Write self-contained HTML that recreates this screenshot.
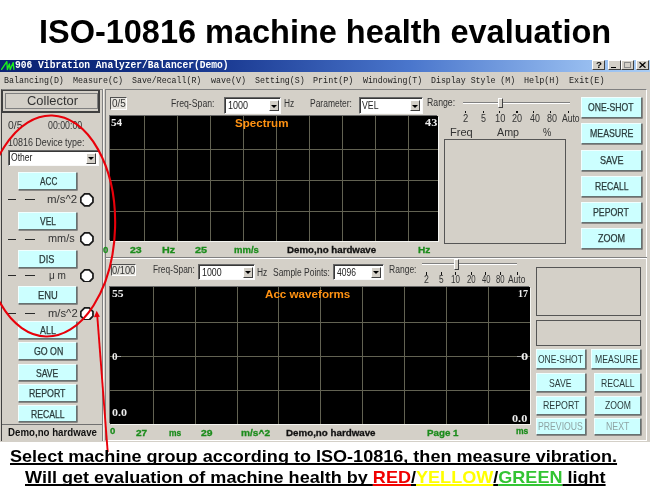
<!DOCTYPE html>
<html><head><meta charset="utf-8">
<style>
html,body{margin:0;padding:0;}
body{width:650px;height:488px;position:relative;overflow:hidden;background:#fff;font-family:"Liberation Sans",sans-serif;}
.a{position:absolute;white-space:nowrap;}
#tbar{left:0;top:59.6px;width:650px;height:12px;background:linear-gradient(90deg,#0c2274 0%,#0e2a7c 15%,#1c3c94 35%,#4a76cc 63%,#98bef0 91%,#a8ccf4 100%);}
#menu{left:0;top:71.6px;width:650px;height:18px;background:#d4d0c8;}
#win{left:0;top:89px;width:650px;height:352.5px;background:#d4d0c8;}
.btn{position:absolute;background:#ccffff;border:1px solid;border-color:#f0ffff #667272 #667272 #f0ffff;box-shadow:0.6px 0.6px 0 #585858;box-sizing:border-box;}
.chart{position:absolute;background:#000;overflow:hidden;box-shadow:1px 1px 0 #f4f4f0,-1px -1px 0 #6a6a6a;}
.chart b{position:absolute;background:#626252;display:block;}
.sel{position:absolute;background:#fff;border:1px solid;border-color:#686868 #f8f8f8 #f8f8f8 #686868;box-shadow:inset 1px 1px 0 #383838;box-sizing:border-box;}
.sel i{position:absolute;right:1.2px;top:1.8px;bottom:1.2px;width:10px;background:#d4d0c8;border:1px solid;border-color:#fff #404040 #404040 #fff;box-sizing:border-box;}
.sel i:after{content:"";position:absolute;left:0.9px;top:3.8px;border:3.1px solid transparent;border-top:3.4px solid #000;border-bottom:0;}
.sunk{position:absolute;border:1px solid;border-color:#808080 #fff #fff #808080;box-sizing:border-box;}
.box{position:absolute;border:1px solid #555;box-sizing:border-box;}
.wb{position:absolute;top:0.5px;height:10px;width:12.5px;background:#d4d0c8;border:1px solid;border-color:#fff #404040 #404040 #fff;box-sizing:border-box;}
.d{position:absolute;height:1.3px;background:#2a2a2a;}
</style></head><body><div id="root" style="position:absolute;left:0;top:0;width:650px;height:488px;will-change:transform;">
<div class="a" style="left:38.88px;top:11.50px;font-family:'Liberation Sans',sans-serif;font-weight:bold;font-size:33.5px;line-height:40px;color:#000;transform:scaleX(0.9693);transform-origin:0 0;">ISO-10816 machine health evaluation</div>
<div id="tbar" class="a"></div>
<svg class="a" style="left:1px;top:60.3px" width="14" height="11" viewBox="0 0 14 11"><path d="M0.6 9.4 L5.8 1.6 L6.4 9.6 L8.4 4 L9.2 9.6 L12.2 2.6 L12.9 9.2" fill="none" stroke="#1cf01c" stroke-width="1.35" stroke-linejoin="round" stroke-linecap="round"/></svg>
<div class="a" style="left:15.48px;top:58.70px;font-family:'Liberation Mono',monospace;font-weight:bold;font-size:10.5px;line-height:13px;color:#fff;transform:scaleX(0.9163);transform-origin:0 0;">906 Vibration Analyzer/Balancer(Demo)</div>
<div class="wb" style="left:592px;top:60.1px"></div>
<div class="wb" style="left:608px;top:60.1px"></div>
<div class="wb" style="left:621px;top:60.1px"></div>
<div class="wb" style="left:636px;top:60.1px"></div>
<div class="a" style="left:595.59px;top:60.00px;font-family:'Liberation Sans',sans-serif;font-weight:bold;font-size:9px;line-height:11px;color:#000;transform:scaleX(1.0811);transform-origin:0 0;">?</div>
<div class="a" style="left:611px;top:66.5px;width:5px;height:1.6px;background:#000"></div>
<div class="a" style="left:624px;top:62px;width:7px;height:6px;border:1px solid #8a8a8a;border-top-width:1.6px;box-sizing:border-box"></div>
<svg class="a" style="left:639px;top:62px" width="7" height="6" viewBox="0 0 7 6"><path d="M0.5 0.3 L6.5 5.7 M6.5 0.3 L0.5 5.7" stroke="#000" stroke-width="1.3"/></svg>
<div id="menu" class="a"></div>
<div class="a" style="left:4.07px;top:75.70px;font-family:'Liberation Mono',monospace;font-weight:normal;font-size:9px;line-height:11px;color:#222;transform:scaleX(0.9236);transform-origin:0 0;">Balancing(D)</div>
<div class="a" style="left:72.88px;top:75.70px;font-family:'Liberation Mono',monospace;font-weight:normal;font-size:9px;line-height:11px;color:#222;transform:scaleX(0.9260);transform-origin:0 0;">Measure(C)</div>
<div class="a" style="left:131.71px;top:75.70px;font-family:'Liberation Mono',monospace;font-weight:normal;font-size:9px;line-height:11px;color:#222;transform:scaleX(0.9165);transform-origin:0 0;">Save/Recall(R)</div>
<div class="a" style="left:211.44px;top:75.70px;font-family:'Liberation Mono',monospace;font-weight:normal;font-size:9px;line-height:11px;color:#222;transform:scaleX(0.9232);transform-origin:0 0;">wave(V)</div>
<div class="a" style="left:254.71px;top:75.70px;font-family:'Liberation Mono',monospace;font-weight:normal;font-size:9px;line-height:11px;color:#222;transform:scaleX(0.9215);transform-origin:0 0;">Setting(S)</div>
<div class="a" style="left:313.36px;top:75.70px;font-family:'Liberation Mono',monospace;font-weight:normal;font-size:9px;line-height:11px;color:#222;transform:scaleX(0.9352);transform-origin:0 0;">Print(P)</div>
<div class="a" style="left:363.10px;top:75.70px;font-family:'Liberation Mono',monospace;font-weight:normal;font-size:9px;line-height:11px;color:#222;transform:scaleX(0.9136);transform-origin:0 0;">Windowing(T)</div>
<div class="a" style="left:431.37px;top:75.70px;font-family:'Liberation Mono',monospace;font-weight:normal;font-size:9px;line-height:11px;color:#222;transform:scaleX(0.9174);transform-origin:0 0;">Display Style (M)</div>
<div class="a" style="left:524.35px;top:75.70px;font-family:'Liberation Mono',monospace;font-weight:normal;font-size:9px;line-height:11px;color:#222;transform:scaleX(0.9394);transform-origin:0 0;">Help(H)</div>
<div class="a" style="left:568.85px;top:75.70px;font-family:'Liberation Mono',monospace;font-weight:normal;font-size:9px;line-height:11px;color:#222;transform:scaleX(0.9394);transform-origin:0 0;">Exit(E)</div>
<div id="win" class="a"></div>
<div class="a" style="left:0.5px;top:89px;width:102px;height:352px;border-left:1.5px solid #404040;border-right:1px solid #808080;border-top:1px solid #808080;box-sizing:border-box;"></div>
<div class="a" style="left:102.5px;top:89px;width:1px;height:352px;background:#f4f2ee"></div>
<div class="a" style="left:1.8px;top:90px;width:98.5px;height:22.5px;border:2px solid #404040;border-left-width:1.5px;border-top-width:1.5px;box-sizing:border-box;"></div>
<div class="a" style="left:4.5px;top:93.3px;width:93px;height:16px;border:1px solid #808080;box-sizing:border-box;"></div>
<div class="a" style="left:26.60px;top:93.20px;font-family:'Liberation Sans',sans-serif;font-weight:normal;font-size:13.5px;line-height:16px;color:#333;transform:scaleX(0.9573);transform-origin:0 0;">Collector</div>
<div class="a" style="left:8.41px;top:120.00px;font-family:'Liberation Sans',sans-serif;font-weight:normal;font-size:10px;line-height:12px;color:#333;transform:scaleX(1.0362);transform-origin:0 0;">0/5</div>
<div class="a" style="left:47.97px;top:120.00px;font-family:'Liberation Sans',sans-serif;font-weight:normal;font-size:10px;line-height:12px;color:#333;transform:scaleX(0.8773);transform-origin:0 0;">00:00:00</div>
<div class="a" style="left:8.13px;top:136.50px;font-family:'Liberation Sans',sans-serif;font-weight:normal;font-size:10px;line-height:12px;color:#333;transform:scaleX(0.8935);transform-origin:0 0;">10816 Device type:</div>
<div class="sel" style="left:8px;top:149.8px;width:90.6px;height:16.0px"><i></i></div>
<div class="a" style="left:10.53px;top:151.50px;font-family:'Liberation Sans',sans-serif;font-weight:normal;font-size:10px;line-height:12px;color:#222;transform:scaleX(0.8552);transform-origin:0 0;">Other</div>
<div class="btn " style="left:18.1px;top:171.6px;width:59.2px;height:18.0px"></div>
<div class="a" style="left:39.60px;top:174.50px;font-family:'Liberation Sans',sans-serif;font-weight:normal;font-size:10.5px;line-height:13px;color:#2a3a3a;transform:scaleX(0.7816);transform-origin:0 0;-webkit-text-stroke:0.25px #2a3a3a;">ACC</div>
<div class="d" style="left:7.6px;top:199.2px;width:8.6px"></div><div class="d" style="left:24.6px;top:199.2px;width:10px"></div>
<div class="a" style="left:47.48px;top:194.10px;font-family:'Liberation Sans',sans-serif;font-weight:normal;font-size:10px;line-height:12px;color:#333;transform:scaleX(1.1446);transform-origin:0 0;">m/s^2</div>
<svg class="a" style="left:80.2px;top:193.1px" width="13.8" height="13.8" viewBox="0 0 15 15"><path d="M5 0.9 L10 0.9 L14.1 5 L14.1 10 L10 14.1 L5 14.1 L0.9 10 L0.9 5 Z" fill="#fff" stroke="#1a1a1a" stroke-width="1.9" stroke-linejoin="round"/></svg>
<div class="btn " style="left:18.1px;top:212px;width:59.2px;height:17.7px"></div>
<div class="a" style="left:39.60px;top:214.90px;font-family:'Liberation Sans',sans-serif;font-weight:normal;font-size:10.5px;line-height:13px;color:#2a3a3a;transform:scaleX(0.8051);transform-origin:0 0;-webkit-text-stroke:0.25px #2a3a3a;">VEL</div>
<div class="d" style="left:7.6px;top:238.5px;width:8.6px"></div><div class="d" style="left:24.6px;top:238.5px;width:10px"></div>
<div class="a" style="left:47.52px;top:233.40px;font-family:'Liberation Sans',sans-serif;font-weight:normal;font-size:10px;line-height:12px;color:#333;transform:scaleX(1.0894);transform-origin:0 0;">mm/s</div>
<svg class="a" style="left:80.2px;top:232.4px" width="13.8" height="13.8" viewBox="0 0 15 15"><path d="M5 0.9 L10 0.9 L14.1 5 L14.1 10 L10 14.1 L5 14.1 L0.9 10 L0.9 5 Z" fill="#fff" stroke="#1a1a1a" stroke-width="1.9" stroke-linejoin="round"/></svg>
<div class="btn " style="left:18.1px;top:250.3px;width:59.2px;height:17.3px"></div>
<div class="a" style="left:39.49px;top:253.20px;font-family:'Liberation Sans',sans-serif;font-weight:normal;font-size:10.5px;line-height:13px;color:#2a3a3a;transform:scaleX(0.8738);transform-origin:0 0;-webkit-text-stroke:0.25px #2a3a3a;">DIS</div>
<div class="d" style="left:7.6px;top:274.8px;width:8.6px"></div><div class="d" style="left:24.6px;top:274.8px;width:10px"></div>
<div class="a" style="left:48.87px;top:269.70px;font-family:'Liberation Sans',sans-serif;font-weight:normal;font-size:10px;line-height:12px;color:#333;transform:scaleX(1.0048);transform-origin:0 0;">μ m</div>
<svg class="a" style="left:80.2px;top:268.7px" width="13.8" height="13.8" viewBox="0 0 15 15"><path d="M5 0.9 L10 0.9 L14.1 5 L14.1 10 L10 14.1 L5 14.1 L0.9 10 L0.9 5 Z" fill="#fff" stroke="#1a1a1a" stroke-width="1.9" stroke-linejoin="round"/></svg>
<div class="btn " style="left:18.1px;top:286.3px;width:59.2px;height:17.3px"></div>
<div class="a" style="left:38.08px;top:289.20px;font-family:'Liberation Sans',sans-serif;font-weight:normal;font-size:10.5px;line-height:13px;color:#2a3a3a;transform:scaleX(0.8900);transform-origin:0 0;-webkit-text-stroke:0.25px #2a3a3a;">ENU</div>
<div class="d" style="left:7.6px;top:312.7px;width:8.6px"></div><div class="d" style="left:24.6px;top:312.7px;width:10px"></div>
<div class="a" style="left:47.50px;top:307.60px;font-family:'Liberation Sans',sans-serif;font-weight:normal;font-size:10px;line-height:12px;color:#333;transform:scaleX(1.1248);transform-origin:0 0;">m/s^2</div>
<svg class="a" style="left:80.2px;top:306.59999999999997px" width="13.8" height="13.8" viewBox="0 0 15 15"><path d="M5 0.9 L10 0.9 L14.1 5 L14.1 10 L10 14.1 L5 14.1 L0.9 10 L0.9 5 Z" fill="#fff" stroke="#1a1a1a" stroke-width="1.9" stroke-linejoin="round"/></svg>
<div class="btn " style="left:18.1px;top:321.4px;width:59.2px;height:17.6px"></div>
<div class="a" style="left:40.20px;top:324.30px;font-family:'Liberation Sans',sans-serif;font-weight:normal;font-size:10.5px;line-height:13px;color:#2a3a3a;transform:scaleX(0.8490);transform-origin:0 0;-webkit-text-stroke:0.25px #2a3a3a;">ALL</div>
<div class="btn " style="left:18.1px;top:342.4px;width:59.2px;height:17.8px"></div>
<div class="a" style="left:33.78px;top:345.30px;font-family:'Liberation Sans',sans-serif;font-weight:normal;font-size:10.5px;line-height:13px;color:#2a3a3a;transform:scaleX(0.8371);transform-origin:0 0;-webkit-text-stroke:0.25px #2a3a3a;">GO ON</div>
<div class="btn " style="left:18.1px;top:363.8px;width:59.2px;height:17.0px"></div>
<div class="a" style="left:35.84px;top:366.70px;font-family:'Liberation Sans',sans-serif;font-weight:normal;font-size:10.5px;line-height:13px;color:#2a3a3a;transform:scaleX(0.8190);transform-origin:0 0;-webkit-text-stroke:0.25px #2a3a3a;">SAVE</div>
<div class="btn " style="left:18.1px;top:384.3px;width:59.2px;height:17.3px"></div>
<div class="a" style="left:28.82px;top:387.20px;font-family:'Liberation Sans',sans-serif;font-weight:normal;font-size:10.5px;line-height:13px;color:#2a3a3a;transform:scaleX(0.8376);transform-origin:0 0;-webkit-text-stroke:0.25px #2a3a3a;">REPORT</div>
<div class="btn " style="left:18.1px;top:404.8px;width:59.2px;height:17.6px"></div>
<div class="a" style="left:30.93px;top:407.70px;font-family:'Liberation Sans',sans-serif;font-weight:normal;font-size:10.5px;line-height:13px;color:#2a3a3a;transform:scaleX(0.8239);transform-origin:0 0;-webkit-text-stroke:0.25px #2a3a3a;">RECALL</div>
<div class="a" style="left:1.5px;top:424px;width:100px;height:1px;background:#707070"></div>
<div class="a" style="left:7.59px;top:426.80px;font-family:'Liberation Sans',sans-serif;font-weight:bold;font-size:10px;line-height:12px;color:#111;transform:scaleX(0.9697);transform-origin:0 0;">Demo,no hardwave</div>
<div class="a" style="left:104.5px;top:89px;width:542.5px;height:352px;border:1px solid #808080;border-right-color:#fff;border-bottom-color:#fff;box-sizing:border-box;"></div>
<div class="sunk" style="left:109.8px;top:97px;width:17px;height:12.7px;background:#e6e4de;border-top-color:#505050;border-left-color:#505050"></div>
<div class="a" style="left:111.86px;top:96.70px;font-family:'Liberation Sans',sans-serif;font-weight:normal;font-size:11px;line-height:13px;color:#333;transform:scaleX(0.9034);transform-origin:0 0;">0/5</div>
<div class="a" style="left:171.29px;top:97.50px;font-family:'Liberation Sans',sans-serif;font-weight:normal;font-size:10px;line-height:12px;color:#333;transform:scaleX(0.8693);transform-origin:0 0;">Freq-Span:</div>
<div class="sel" style="left:223.6px;top:97px;width:57.4px;height:16.6px"><i></i></div>
<div class="a" style="left:227.53px;top:99.50px;font-family:'Liberation Sans',sans-serif;font-weight:normal;font-size:10px;line-height:12px;color:#222;transform:scaleX(0.8994);transform-origin:0 0;">1000</div>
<div class="a" style="left:283.72px;top:97.80px;font-family:'Liberation Sans',sans-serif;font-weight:normal;font-size:10px;line-height:12px;color:#333;transform:scaleX(0.8364);transform-origin:0 0;">Hz</div>
<div class="a" style="left:310.01px;top:97.50px;font-family:'Liberation Sans',sans-serif;font-weight:normal;font-size:10px;line-height:12px;color:#333;transform:scaleX(0.8482);transform-origin:0 0;">Parameter:</div>
<div class="sel" style="left:359px;top:97px;width:63.6px;height:16.6px"><i></i></div>
<div class="a" style="left:361.90px;top:99.50px;font-family:'Liberation Sans',sans-serif;font-weight:normal;font-size:10px;line-height:12px;color:#222;transform:scaleX(0.8727);transform-origin:0 0;">VEL</div>
<div class="a" style="left:427.49px;top:97.00px;font-family:'Liberation Sans',sans-serif;font-weight:normal;font-size:10px;line-height:12px;color:#333;transform:scaleX(0.8721);transform-origin:0 0;">Range:</div>
<div class="a" style="left:462.6px;top:101.5px;width:107.60000000000002px;height:2px;border-top:1px solid #808080;border-bottom:1px solid #fff;box-sizing:border-box"></div><div class="a" style="left:498px;top:97.5px;width:4.5px;height:10.5px;background:#d4d0c8;border:1px solid;border-color:#fff #404040 #404040 #fff;box-sizing:border-box"></div><div class="a" style="left:465.3px;top:110.5px;width:1.2px;height:2.6px;background:#111"></div><div class="a" style="left:482.5px;top:110.5px;width:1.2px;height:2.6px;background:#111"></div><div class="a" style="left:499.3px;top:110.5px;width:1.2px;height:2.6px;background:#111"></div><div class="a" style="left:516.4px;top:110.5px;width:1.2px;height:2.6px;background:#111"></div><div class="a" style="left:533.2px;top:110.5px;width:1.2px;height:2.6px;background:#111"></div><div class="a" style="left:550.3px;top:110.5px;width:1.2px;height:2.6px;background:#111"></div><div class="a" style="left:567.8px;top:110.5px;width:1.2px;height:2.6px;background:#111"></div><div class="a" style="left:463.38px;top:113.20px;font-family:'Liberation Sans',sans-serif;font-weight:normal;font-size:10px;line-height:12px;color:#333;transform:scaleX(0.9425);transform-origin:0 0;">2</div><div class="a" style="left:480.51px;top:113.20px;font-family:'Liberation Sans',sans-serif;font-weight:normal;font-size:10px;line-height:12px;color:#333;transform:scaleX(0.8935);transform-origin:0 0;">5</div><div class="a" style="left:495.15px;top:113.20px;font-family:'Liberation Sans',sans-serif;font-weight:normal;font-size:10px;line-height:12px;color:#333;transform:scaleX(0.9300);transform-origin:0 0;">10</div><div class="a" style="left:512.40px;top:113.20px;font-family:'Liberation Sans',sans-serif;font-weight:normal;font-size:10px;line-height:12px;color:#333;transform:scaleX(0.9073);transform-origin:0 0;">20</div><div class="a" style="left:529.68px;top:113.20px;font-family:'Liberation Sans',sans-serif;font-weight:normal;font-size:10px;line-height:12px;color:#333;transform:scaleX(0.8805);transform-origin:0 0;">40</div><div class="a" style="left:546.61px;top:113.20px;font-family:'Liberation Sans',sans-serif;font-weight:normal;font-size:10px;line-height:12px;color:#333;transform:scaleX(0.8964);transform-origin:0 0;">80</div><div class="a" style="left:562.35px;top:113.20px;font-family:'Liberation Sans',sans-serif;font-weight:normal;font-size:10px;line-height:12px;color:#333;transform:scaleX(0.8570);transform-origin:0 0;">Auto</div>
<div class="a" style="left:450.02px;top:125.50px;font-family:'Liberation Sans',sans-serif;font-weight:normal;font-size:11px;line-height:13px;color:#333;transform:scaleX(1.0065);transform-origin:0 0;">Freq</div>
<div class="a" style="left:496.70px;top:125.50px;font-family:'Liberation Sans',sans-serif;font-weight:normal;font-size:11px;line-height:13px;color:#333;transform:scaleX(0.9735);transform-origin:0 0;">Amp</div>
<div class="a" style="left:542.58px;top:125.50px;font-family:'Liberation Sans',sans-serif;font-weight:normal;font-size:11px;line-height:13px;color:#333;transform:scaleX(0.8497);transform-origin:0 0;">%</div>
<div class="box" style="left:443.5px;top:139px;width:122px;height:105px"></div>
<div class="btn " style="left:581.3px;top:96.9px;width:60.7px;height:21.0px"></div>
<div class="a" style="left:588.34px;top:101.00px;font-family:'Liberation Sans',sans-serif;font-weight:normal;font-size:10.5px;line-height:13px;color:#2a3a3a;transform:scaleX(0.8201);transform-origin:0 0;-webkit-text-stroke:0.25px #2a3a3a;">ONE-SHOT</div>
<div class="btn " style="left:581.3px;top:123.2px;width:60.7px;height:21.0px"></div>
<div class="a" style="left:589.82px;top:127.30px;font-family:'Liberation Sans',sans-serif;font-weight:normal;font-size:10.5px;line-height:13px;color:#2a3a3a;transform:scaleX(0.8345);transform-origin:0 0;-webkit-text-stroke:0.25px #2a3a3a;">MEASURE</div>
<div class="btn " style="left:581.3px;top:149.5px;width:60.7px;height:21.0px"></div>
<div class="a" style="left:599.82px;top:153.60px;font-family:'Liberation Sans',sans-serif;font-weight:normal;font-size:10.5px;line-height:13px;color:#2a3a3a;transform:scaleX(0.8645);transform-origin:0 0;-webkit-text-stroke:0.25px #2a3a3a;">SAVE</div>
<div class="btn " style="left:581.3px;top:175.6px;width:60.7px;height:21.0px"></div>
<div class="a" style="left:595.03px;top:179.70px;font-family:'Liberation Sans',sans-serif;font-weight:normal;font-size:10.5px;line-height:13px;color:#2a3a3a;transform:scaleX(0.8214);transform-origin:0 0;-webkit-text-stroke:0.25px #2a3a3a;">RECALL</div>
<div class="btn " style="left:581.3px;top:202px;width:60.7px;height:21.0px"></div>
<div class="a" style="left:593.32px;top:206.10px;font-family:'Liberation Sans',sans-serif;font-weight:normal;font-size:10.5px;line-height:13px;color:#2a3a3a;transform:scaleX(0.8346);transform-origin:0 0;-webkit-text-stroke:0.25px #2a3a3a;">PEPORT</div>
<div class="btn " style="left:581.3px;top:228.2px;width:60.7px;height:21.0px"></div>
<div class="a" style="left:598.33px;top:232.30px;font-family:'Liberation Sans',sans-serif;font-weight:normal;font-size:10.5px;line-height:13px;color:#2a3a3a;transform:scaleX(0.8626);transform-origin:0 0;-webkit-text-stroke:0.25px #2a3a3a;">ZOOM</div>
<div class="chart" style="left:109.8px;top:116px;width:328.2px;height:124.6px"><b style="left:34.1px;top:0;width:1px;height:100%"></b><b style="left:67.1px;top:0;width:1px;height:100%"></b><b style="left:100.0px;top:0;width:1px;height:100%"></b><b style="left:133.0px;top:0;width:1px;height:100%"></b><b style="left:165.9px;top:0;width:1px;height:100%"></b><b style="left:198.9px;top:0;width:1px;height:100%"></b><b style="left:231.9px;top:0;width:1px;height:100%"></b><b style="left:264.8px;top:0;width:1px;height:100%"></b><b style="left:297.8px;top:0;width:1px;height:100%"></b><b style="top:32.6px;left:0;height:1px;width:100%"></b><b style="top:64.0px;left:0;height:1px;width:100%"></b><b style="top:95.4px;left:0;height:1px;width:100%"></b></div>
<div class="a" style="left:111.40px;top:116.00px;font-family:'Liberation Serif',serif;font-weight:bold;font-size:10.5px;line-height:13px;color:#eee;transform:scaleX(1.0566);transform-origin:0 0;">54</div>
<div class="a" style="left:425.45px;top:116.00px;font-family:'Liberation Serif',serif;font-weight:bold;font-size:10.5px;line-height:13px;color:#eee;transform:scaleX(1.1727);transform-origin:0 0;">43</div>
<div class="a" style="left:235.02px;top:116.50px;font-family:'Liberation Sans',sans-serif;font-weight:bold;font-size:10.5px;line-height:13px;color:#ff9212;transform:scaleX(1.1038);transform-origin:0 0;">Spectrum</div>
<div class="a" style="left:103.12px;top:243.50px;font-family:'Liberation Sans',sans-serif;font-weight:bold;font-size:9.5px;line-height:11px;color:#1c8c1c;transform:scaleX(1.0082);transform-origin:0 0;-webkit-text-stroke:0.3px #1c8c1c;">0</div>
<div class="a" style="left:129.85px;top:243.50px;font-family:'Liberation Sans',sans-serif;font-weight:bold;font-size:9.5px;line-height:11px;color:#1c8c1c;transform:scaleX(1.1100);transform-origin:0 0;-webkit-text-stroke:0.3px #1c8c1c;">23</div>
<div class="a" style="left:161.79px;top:243.50px;font-family:'Liberation Sans',sans-serif;font-weight:bold;font-size:9.5px;line-height:11px;color:#1c8c1c;transform:scaleX(1.1322);transform-origin:0 0;-webkit-text-stroke:0.3px #1c8c1c;">Hz</div>
<div class="a" style="left:194.54px;top:243.50px;font-family:'Liberation Sans',sans-serif;font-weight:bold;font-size:9.5px;line-height:11px;color:#1c8c1c;transform:scaleX(1.1429);transform-origin:0 0;-webkit-text-stroke:0.3px #1c8c1c;">25</div>
<div class="a" style="left:234.47px;top:243.50px;font-family:'Liberation Sans',sans-serif;font-weight:bold;font-size:9.5px;line-height:11px;color:#1c8c1c;transform:scaleX(1.0010);transform-origin:0 0;-webkit-text-stroke:0.3px #1c8c1c;">mm/s</div>
<div class="a" style="left:286.76px;top:243.50px;font-family:'Liberation Sans',sans-serif;font-weight:bold;font-size:9.5px;line-height:11px;color:#111;transform:scaleX(1.0234);transform-origin:0 0;-webkit-text-stroke:0.3px #111;">Demo,no hardwave</div>
<div class="a" style="left:417.73px;top:243.50px;font-family:'Liberation Sans',sans-serif;font-weight:bold;font-size:9.5px;line-height:11px;color:#1c8c1c;transform:scaleX(1.0667);transform-origin:0 0;-webkit-text-stroke:0.3px #1c8c1c;">Hz</div>
<div class="a" style="left:105.5px;top:257.3px;width:541px;height:2px;border-top:1px solid #808080;border-bottom:1px solid #fff;box-sizing:border-box"></div>
<div class="sunk" style="left:111px;top:263.8px;width:25.3px;height:12px;background:#e2e0da;border-top-color:#505050;border-left-color:#505050"></div>
<div class="a" style="left:112.38px;top:263.70px;font-family:'Liberation Sans',sans-serif;font-weight:normal;font-size:11px;line-height:13px;color:#333;transform:scaleX(0.8429);transform-origin:0 0;">0/100</div>
<div class="a" style="left:152.52px;top:263.70px;font-family:'Liberation Sans',sans-serif;font-weight:normal;font-size:10px;line-height:12px;color:#333;transform:scaleX(0.8342);transform-origin:0 0;">Freq-Span:</div>
<div class="sel" style="left:197.5px;top:263.8px;width:57.5px;height:16.7px"><i></i></div>
<div class="a" style="left:201.54px;top:266.70px;font-family:'Liberation Sans',sans-serif;font-weight:normal;font-size:10px;line-height:12px;color:#222;transform:scaleX(0.8805);transform-origin:0 0;">1000</div>
<div class="a" style="left:257.42px;top:266.70px;font-family:'Liberation Sans',sans-serif;font-weight:normal;font-size:10px;line-height:12px;color:#333;transform:scaleX(0.8364);transform-origin:0 0;">Hz</div>
<div class="a" style="left:273.13px;top:266.70px;font-family:'Liberation Sans',sans-serif;font-weight:normal;font-size:10px;line-height:12px;color:#333;transform:scaleX(0.8463);transform-origin:0 0;">Sample Points:</div>
<div class="sel" style="left:333px;top:263.8px;width:50.5px;height:16.7px"><i></i></div>
<div class="a" style="left:336.54px;top:266.70px;font-family:'Liberation Sans',sans-serif;font-weight:normal;font-size:10px;line-height:12px;color:#222;transform:scaleX(0.8509);transform-origin:0 0;">4096</div>
<div class="a" style="left:388.51px;top:264.00px;font-family:'Liberation Sans',sans-serif;font-weight:normal;font-size:10px;line-height:12px;color:#333;transform:scaleX(0.8525);transform-origin:0 0;">Range:</div>
<div class="a" style="left:422.2px;top:263.3px;width:94.80000000000001px;height:2px;border-top:1px solid #808080;border-bottom:1px solid #fff;box-sizing:border-box"></div><div class="a" style="left:454px;top:259.3px;width:4.5px;height:10.5px;background:#d4d0c8;border:1px solid;border-color:#fff #404040 #404040 #fff;box-sizing:border-box"></div><div class="a" style="left:426.1px;top:272.3px;width:1.2px;height:2.6px;background:#111"></div><div class="a" style="left:440.9px;top:272.3px;width:1.2px;height:2.6px;background:#111"></div><div class="a" style="left:455.3px;top:272.3px;width:1.2px;height:2.6px;background:#111"></div><div class="a" style="left:470.5px;top:272.3px;width:1.2px;height:2.6px;background:#111"></div><div class="a" style="left:485.2px;top:272.3px;width:1.2px;height:2.6px;background:#111"></div><div class="a" style="left:500.0px;top:272.3px;width:1.2px;height:2.6px;background:#111"></div><div class="a" style="left:516.5px;top:272.3px;width:1.2px;height:2.6px;background:#111"></div><div class="a" style="left:424.16px;top:274.30px;font-family:'Liberation Sans',sans-serif;font-weight:normal;font-size:10px;line-height:12px;color:#333;transform:scaleX(0.8767);transform-origin:0 0;">2</div><div class="a" style="left:439.09px;top:274.30px;font-family:'Liberation Sans',sans-serif;font-weight:normal;font-size:10px;line-height:12px;color:#333;transform:scaleX(0.8312);transform-origin:0 0;">5</div><div class="a" style="left:451.40px;top:274.30px;font-family:'Liberation Sans',sans-serif;font-weight:normal;font-size:10px;line-height:12px;color:#333;transform:scaleX(0.8000);transform-origin:0 0;">10</div><div class="a" style="left:466.61px;top:274.30px;font-family:'Liberation Sans',sans-serif;font-weight:normal;font-size:10px;line-height:12px;color:#333;transform:scaleX(0.7805);transform-origin:0 0;">20</div><div class="a" style="left:481.86px;top:274.30px;font-family:'Liberation Sans',sans-serif;font-weight:normal;font-size:10px;line-height:12px;color:#333;transform:scaleX(0.7574);transform-origin:0 0;">40</div><div class="a" style="left:495.71px;top:274.30px;font-family:'Liberation Sans',sans-serif;font-weight:normal;font-size:10px;line-height:12px;color:#333;transform:scaleX(0.7711);transform-origin:0 0;">80</div><div class="a" style="left:508.00px;top:274.30px;font-family:'Liberation Sans',sans-serif;font-weight:normal;font-size:10px;line-height:12px;color:#333;transform:scaleX(0.8421);transform-origin:0 0;">Auto</div>
<div class="chart" style="left:110px;top:287px;width:419.8px;height:137.2px"><b style="left:42.8px;top:0;width:1px;height:100%"></b><b style="left:84.7px;top:0;width:1px;height:100%"></b><b style="left:126.5px;top:0;width:1px;height:100%"></b><b style="left:168.4px;top:0;width:1px;height:100%"></b><b style="left:210.3px;top:0;width:1px;height:100%"></b><b style="left:252.1px;top:0;width:1px;height:100%"></b><b style="left:294.0px;top:0;width:1px;height:100%"></b><b style="left:335.9px;top:0;width:1px;height:100%"></b><b style="left:377.8px;top:0;width:1px;height:100%"></b><b style="top:34.8px;left:0;height:1px;width:100%"></b><b style="top:69.1px;left:0;height:1px;width:100%"></b><b style="top:103.4px;left:0;height:1px;width:100%"></b></div>
<div class="a" style="left:111.58px;top:287.10px;font-family:'Liberation Serif',serif;font-weight:bold;font-size:10.5px;line-height:13px;color:#eee;transform:scaleX(1.1077);transform-origin:0 0;">55</div>
<div class="a" style="left:111.60px;top:350.30px;font-family:'Liberation Serif',serif;font-weight:bold;font-size:10.5px;line-height:13px;color:#eee;transform:scaleX(1.0667);transform-origin:0 0;">0</div>
<div class="a" style="left:111.57px;top:405.60px;font-family:'Liberation Serif',serif;font-weight:bold;font-size:10.5px;line-height:13px;color:#eee;transform:scaleX(1.1475);transform-origin:0 0;">0.0</div>
<div class="a" style="left:518.03px;top:287.10px;font-family:'Liberation Serif',serif;font-weight:bold;font-size:10.5px;line-height:13px;color:#eee;transform:scaleX(0.9536);transform-origin:0 0;">17</div>
<div class="a" style="left:521.08px;top:350.30px;font-family:'Liberation Serif',serif;font-weight:bold;font-size:10.5px;line-height:13px;color:#eee;transform:scaleX(1.3778);transform-origin:0 0;">0</div>
<div class="a" style="left:511.76px;top:411.60px;font-family:'Liberation Serif',serif;font-weight:bold;font-size:10.5px;line-height:13px;color:#eee;transform:scaleX(1.1636);transform-origin:0 0;">0.0</div>
<div class="a" style="left:117px;top:356px;width:4px;height:1px;background:#aaa"></div><div class="a" style="left:517px;top:356px;width:4px;height:1px;background:#aaa"></div>
<div class="a" style="left:264.92px;top:288.00px;font-family:'Liberation Sans',sans-serif;font-weight:bold;font-size:10.5px;line-height:13px;color:#ff9212;transform:scaleX(1.1077);transform-origin:0 0;">Acc waveforms</div>
<div class="a" style="left:110.02px;top:425.30px;font-family:'Liberation Sans',sans-serif;font-weight:bold;font-size:9.5px;line-height:11px;color:#1c8c1c;transform:scaleX(1.0082);transform-origin:0 0;-webkit-text-stroke:0.3px #1c8c1c;">0</div>
<div class="a" style="left:136.37px;top:427.00px;font-family:'Liberation Sans',sans-serif;font-weight:bold;font-size:9.5px;line-height:11px;color:#1c8c1c;transform:scaleX(1.0633);transform-origin:0 0;-webkit-text-stroke:0.3px #1c8c1c;">27</div>
<div class="a" style="left:169.04px;top:427.00px;font-family:'Liberation Sans',sans-serif;font-weight:bold;font-size:9.5px;line-height:11px;color:#1c8c1c;transform:scaleX(0.8941);transform-origin:0 0;-webkit-text-stroke:0.3px #1c8c1c;">ms</div>
<div class="a" style="left:201.36px;top:427.00px;font-family:'Liberation Sans',sans-serif;font-weight:bold;font-size:9.5px;line-height:11px;color:#1c8c1c;transform:scaleX(1.0868);transform-origin:0 0;-webkit-text-stroke:0.3px #1c8c1c;">29</div>
<div class="a" style="left:241.03px;top:427.00px;font-family:'Liberation Sans',sans-serif;font-weight:bold;font-size:9.5px;line-height:11px;color:#1c8c1c;transform:scaleX(1.0667);transform-origin:0 0;-webkit-text-stroke:0.3px #1c8c1c;">m/s^2</div>
<div class="a" style="left:286.36px;top:427.00px;font-family:'Liberation Sans',sans-serif;font-weight:bold;font-size:9.5px;line-height:11px;color:#111;transform:scaleX(1.0280);transform-origin:0 0;-webkit-text-stroke:0.3px #111;">Demo,no hardwave</div>
<div class="a" style="left:427.16px;top:427.00px;font-family:'Liberation Sans',sans-serif;font-weight:bold;font-size:9.5px;line-height:11px;color:#1c8c1c;transform:scaleX(1.0298);transform-origin:0 0;-webkit-text-stroke:0.3px #1c8c1c;">Page 1</div>
<div class="a" style="left:515.94px;top:424.60px;font-family:'Liberation Sans',sans-serif;font-weight:bold;font-size:9.5px;line-height:11px;color:#1c8c1c;transform:scaleX(0.9020);transform-origin:0 0;-webkit-text-stroke:0.3px #1c8c1c;">ms</div>
<div class="box" style="left:535.5px;top:267.4px;width:105.5px;height:49px"></div>
<div class="box" style="left:535.5px;top:319.8px;width:105.5px;height:26.4px"></div>
<div class="btn " style="left:535.5px;top:349.3px;width:50.3px;height:19.7px"></div>
<div class="a" style="left:538.15px;top:352.80px;font-family:'Liberation Sans',sans-serif;font-weight:normal;font-size:10.5px;line-height:13px;color:#2a3a3a;transform:scaleX(0.8091);transform-origin:0 0;">ONE-SHOT</div>
<div class="btn " style="left:591.4px;top:349.3px;width:49.8px;height:19.7px"></div>
<div class="a" style="left:595.03px;top:352.80px;font-family:'Liberation Sans',sans-serif;font-weight:normal;font-size:10.5px;line-height:13px;color:#2a3a3a;transform:scaleX(0.8266);transform-origin:0 0;">MEASURE</div>
<div class="btn " style="left:535.5px;top:373px;width:50.3px;height:19.4px"></div>
<div class="a" style="left:549.14px;top:376.50px;font-family:'Liberation Sans',sans-serif;font-weight:normal;font-size:10.5px;line-height:13px;color:#2a3a3a;transform:scaleX(0.8265);transform-origin:0 0;">SAVE</div>
<div class="btn " style="left:594.1px;top:373px;width:47.1px;height:19.4px"></div>
<div class="a" style="left:601.43px;top:376.50px;font-family:'Liberation Sans',sans-serif;font-weight:normal;font-size:10.5px;line-height:13px;color:#2a3a3a;transform:scaleX(0.8239);transform-origin:0 0;">RECALL</div>
<div class="btn " style="left:535.5px;top:395.7px;width:50.3px;height:19.3px"></div>
<div class="a" style="left:542.52px;top:398.70px;font-family:'Liberation Sans',sans-serif;font-weight:normal;font-size:10.5px;line-height:13px;color:#2a3a3a;transform:scaleX(0.8376);transform-origin:0 0;">REPORT</div>
<div class="btn " style="left:594.1px;top:395.7px;width:47.1px;height:19.3px"></div>
<div class="a" style="left:605.14px;top:398.70px;font-family:'Liberation Sans',sans-serif;font-weight:normal;font-size:10.5px;line-height:13px;color:#2a3a3a;transform:scaleX(0.8230);transform-origin:0 0;">ZOOM</div>
<div class="btn " style="left:535.5px;top:418.4px;width:50.3px;height:16.6px"></div>
<div class="a" style="left:538.33px;top:419.90px;font-family:'Liberation Sans',sans-serif;font-weight:normal;font-size:10.5px;line-height:13px;color:#8fa4a4;transform:scaleX(0.8264);transform-origin:0 0;">PREVIOUS</div>
<div class="btn " style="left:594.1px;top:418.4px;width:47.1px;height:16.6px"></div>
<div class="a" style="left:606.12px;top:419.90px;font-family:'Liberation Sans',sans-serif;font-weight:normal;font-size:10.5px;line-height:13px;color:#8fa4a4;transform:scaleX(0.8353);transform-origin:0 0;">NEXT</div>
<svg class="a" style="left:0;top:0" width="650" height="488" viewBox="0 0 650 488">
<ellipse cx="49" cy="226" rx="66.1" ry="110.6" fill="none" stroke="#e8000a" stroke-width="2.1" transform="rotate(1.6 49 226)"/>
<line x1="107.7" y1="452" x2="97.2" y2="315" stroke="#e8000a" stroke-width="1.9"/>
<path d="M96.7 310.8 L93.9 317.2 L99.9 316.8 Z" fill="#e8000a"/>
</svg>
<div class="a" style="left:9.94px;top:446.80px;font-weight:bold;font-size:17px;line-height:20px;transform:scaleX(1.0621);transform-origin:0 0;"><span style="color:#000;text-decoration:underline;text-decoration-thickness:1.6px;text-underline-offset:1.2px;text-decoration-skip-ink:none">Select machine group according to ISO-10816, then measure vibration.</span></div>
<div class="a" style="left:24.60px;top:467.80px;font-weight:bold;font-size:17px;line-height:20px;transform:scaleX(1.0618);transform-origin:0 0;"><span style="color:#000;text-decoration:underline;text-decoration-thickness:1.6px;text-underline-offset:1.2px;text-decoration-skip-ink:none">Will get evaluation of machine health by </span><span style="color:#f00000;text-decoration:underline;text-decoration-thickness:1.6px;text-underline-offset:1.2px;text-decoration-skip-ink:none">RED</span><span style="color:#000;text-decoration:underline;text-decoration-thickness:1.6px;text-underline-offset:1.2px;text-decoration-skip-ink:none">/</span><span style="color:#ffff00;text-decoration:underline;text-decoration-thickness:1.6px;text-underline-offset:1.2px;text-decoration-skip-ink:none">YELLOW</span><span style="color:#000;text-decoration:underline;text-decoration-thickness:1.6px;text-underline-offset:1.2px;text-decoration-skip-ink:none">/</span><span style="color:#33c433;text-decoration:underline;text-decoration-thickness:1.6px;text-underline-offset:1.2px;text-decoration-skip-ink:none">GREEN</span><span style="color:#000;text-decoration:underline;text-decoration-thickness:1.6px;text-underline-offset:1.2px;text-decoration-skip-ink:none"> light</span></div>
</div></body></html>
